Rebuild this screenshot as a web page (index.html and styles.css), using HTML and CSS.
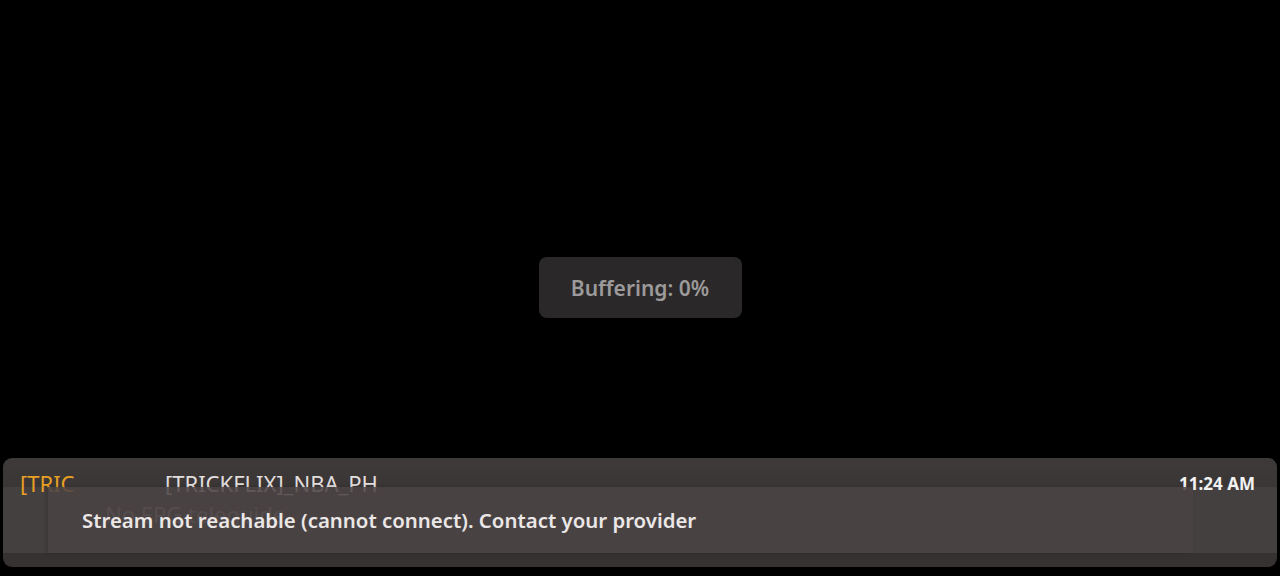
FILE: index.html
```html
<!DOCTYPE html>
<html lang="en">
<head>
<meta charset="utf-8">
<title>Player</title>
<link rel="stylesheet" href="styles.css">
</head>
<body>
<div class="player">
  <div class="video">
    <div class="buffering">Buffering: 0%</div>
  </div>
  <div class="infobar">
    <div class="info-row">
      <div class="logo">[TRIC</div>
      <div class="details">
        <div class="channel">[TRICKFLIX]_NBA_PH</div>
        <div class="epg">No EPG teleguide</div>
      </div>
      <div class="clock">11:24 AM</div>
    </div>
    <div class="toast">Stream not reachable (cannot connect). Contact your provider</div>
  </div>
</div>
</body>
</html>
```
FILE: styles.css
```css
html, body {
  margin: 0;
  padding: 0;
  background: #000;
  height: 100%;
}

.player {
  height: 576px;
  display: flex;
  flex-direction: column;
  font-family: "Noto Sans", "Open Sans", sans-serif;
}

.video {
  flex: 1;
  display: flex;
  align-items: center;
  justify-content: center;
  padding-top: 117px;
}

.buffering {
  width: 203px;
  height: 61px;
  box-sizing: border-box;
  border-radius: 8px;
  background: #2a2828;
  color: #9c9a9a;
  font-size: 21px;
  font-weight: 600;
  display: flex;
  align-items: center;
  justify-content: center;
}

.infobar {
  position: relative;
  margin: 0 3px 9px 3px;
  height: 109px;
  border-radius: 9px;
  background: linear-gradient(#3e3a3a 0, #3a3636 29px, #454040 29px, #454040 95px, #363232 95px);
}

.info-row {
  display: flex;
  align-items: flex-start;
  padding: 11px 22px 0 17px;
}

.logo {
  width: 56px;
  white-space: nowrap;
  color: #e8a024;
  font-size: 22px;
  line-height: 28px;
}

.details {
  flex: 1;
  padding-left: 29px;
}

.channel {
  color: #e2dede;
  font-size: 22px;
  line-height: 28px;
  padding-left: 60px;
}

.epg {
  color: #8e8888;
  font-size: 22px;
  line-height: 28px;
  margin-top: 3px;
}

.clock {
  color: #f2f2f2;
  font-size: 17px;
  font-weight: 700;
  line-height: 30px;
}

.toast {
  position: absolute;
  left: 45px;
  top: 29px;
  width: 1145px;
  height: 66px;
  box-sizing: border-box;
  padding-left: 34px;
  display: flex;
  align-items: center;
  background: rgba(74, 66, 67, 0.86);
  box-shadow: -2px 0 4px rgba(0, 0, 0, 0.15);
  color: #ebe7e7;
  font-size: 20.4px;
  font-weight: 600;
}
```
